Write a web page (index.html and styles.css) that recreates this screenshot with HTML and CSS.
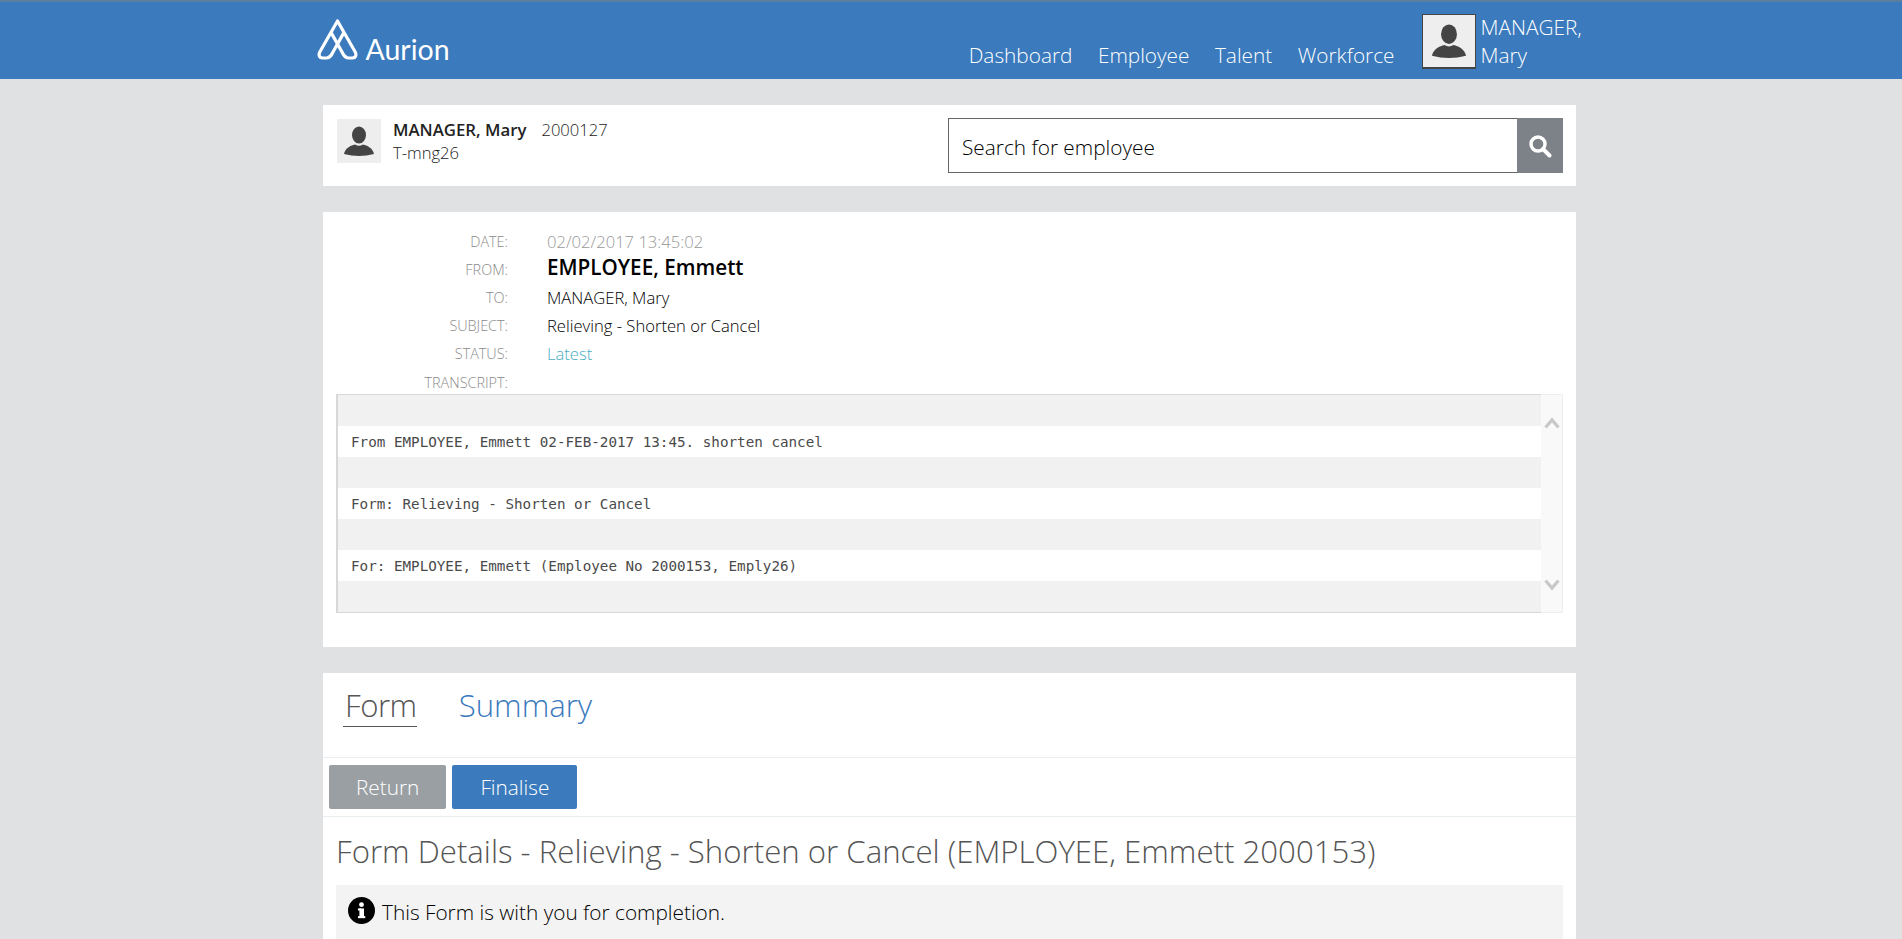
FILE: index.html
```html
<!DOCTYPE html>
<html lang="en">
<head>
	<meta charset="UTF-8">
	<title>Aurion - Form</title>
	<link rel="stylesheet" href="styles.css">
</head>
<body>
	<svg class="defs" width="0" height="0">
		<symbol id="person" viewBox="0 0 44 44">
			<ellipse cx="22" cy="16" rx="7" ry="8.6" fill="#444"/>
			<path d="M7 35C8 29 14 26.500 18 25.500Q22 28 26 25.500C30 26.500 36 29 37 35Q22 39 7 35z" fill="#444"/>
		</symbol>
	</svg>

	<header class="topbar">
		<div class="topbar-inner">
			<a class="logo" href="#">
				<svg class="logo-mark" viewBox="0 0 41 41" width="41" height="41">
					<path d="M14 13.400L25 33Q27.500 38.500 31 39L35.500 39Q40 38.500 38.500 33.500L20.500 2L2.500 33.500Q1 38.500 5.500 39L10 39Q13.500 38.500 16 33L27 13.400" fill="none" stroke="#fff" stroke-width="3.200" stroke-linejoin="round"/>
				</svg>
				<span class="logo-text">Aurion</span>
			</a>
			<nav class="nav">
				<a href="#">Dashboard</a>
				<a href="#">Employee</a>
				<a href="#">Talent</a>
				<a href="#">Workforce</a>
			</nav>
			<div class="user">
				<div class="avatar avatar-big">
					<svg viewBox="0 0 44 44" width="50" height="50"><use href="#person"/></svg>
				</div>
				<span class="user-name">MANAGER, Mary</span>
			</div>
		</div>
	</header>

	<main class="page">
		<section class="card who">
			<div class="avatar avatar-small">
				<svg viewBox="0 0 44 44" width="44" height="44"><use href="#person"/></svg>
			</div>
			<div class="who-text">
				<div><b>MANAGER, Mary</b><span class="who-no">2000127</span></div>
				<div>T-mng26</div>
			</div>
			<form class="search">
				<input class="search-box" type="text" placeholder="Search for employee">
				<button class="search-btn" type="button">
					<svg viewBox="0 0 24 24" width="24" height="24"><circle cx="10" cy="10" r="7" fill="none" stroke="#fff" stroke-width="3.400"/><path d="M15 15l6.500 6.500" stroke="#fff" stroke-width="4" stroke-linecap="round"/></svg>
				</button>
			</form>
		</section>

		<section class="card message">
			<dl class="fields">
				<dt>DATE:</dt><dd class="grey">02/02/2017 13:45:02</dd>
				<dt>FROM:</dt><dd class="from">EMPLOYEE, Emmett</dd>
				<dt>TO:</dt><dd>MANAGER, Mary</dd>
				<dt>SUBJECT:</dt><dd>Relieving - Shorten or Cancel</dd>
				<dt>STATUS:</dt><dd class="teal">Latest</dd>
				<dt>TRANSCRIPT:</dt><dd></dd>
			</dl>
			<div class="transcript">
				<div class="lines">
					<div class="line"></div>
					<div class="line">From EMPLOYEE, Emmett 02-FEB-2017 13:45. shorten cancel</div>
					<div class="line"></div>
					<div class="line">Form: Relieving - Shorten or Cancel</div>
					<div class="line"></div>
					<div class="line">For: EMPLOYEE, Emmett (Employee No 2000153, Emply26)</div>
					<div class="line"></div>
				</div>
				<div class="scroll">
					<svg viewBox="0 0 16 12" width="16" height="12"><path d="M1.500 10.500L8 3l6.500 7.500" fill="none" stroke="#c8c8c8" stroke-width="3.200"/></svg>
					<svg viewBox="0 0 16 12" width="16" height="12"><path d="M1.500 1.500L8 9l6.500-7.500" fill="none" stroke="#c8c8c8" stroke-width="3.200"/></svg>
				</div>
			</div>
		</section>

		<section class="card form-card">
			<div class="tabs">
				<a class="tab active" href="#">Form</a>
				<a class="tab" href="#">Summary</a>
			</div>
			<div class="actions">
				<button class="btn btn-grey" type="button">Return</button>
				<button class="btn btn-blue" type="button">Finalise</button>
			</div>
			<div class="details">
				<h2>Form Details - Relieving - Shorten or Cancel (EMPLOYEE, Emmett 2000153)</h2>
				<div class="notice">
					<svg viewBox="0 0 26 26" width="27" height="27"><circle cx="13" cy="13" r="13" fill="#000"/><rect x="11" y="11" width="4.400" height="9" fill="#fff"/><rect x="9.600" y="11" width="3" height="2" fill="#fff"/><rect x="9.600" y="18.400" width="7" height="2" fill="#fff"/><circle cx="13" cy="7.400" r="2.300" fill="#fff"/></svg>
					<span class="notice-text">This Form is with you for completion.</span>
				</div>
			</div>
		</section>
	</main>
</body>
</html>
```

FILE: styles.css
```css
* {
	box-sizing: border-box;
}

html, body {
	height: 939px;
	overflow: hidden;
}

body {
	margin: 0;
	font-family: "Open Sans", sans-serif;
	font-weight: 300;
	color: #000;
	background-color: #dfe1e3;
}

a {
	text-decoration: none;
	color: inherit;
}

.defs {
	position: absolute;
}

/* content centres in 1899, not 1902 */
.topbar {
	height: 79px;
	padding-right: 3px;
	background-color: #3a7abd;
	border-top: 2px solid #5a7f9f;
	color: #fff;
}

.topbar-inner {
	width: 1272px;
	margin: 0 auto;
	display: flex;
	align-items: flex-end;
	height: 100%;
}

.logo {
	display: flex;
	align-items: flex-end;
	gap: 8px;
	align-self: flex-start;
	margin: 17px 0 0 3px;
}

.logo-text {
	font-family: Lato, sans-serif;
	font-size: 28.500px;
	line-height: 22px;
	font-weight: 400;
}

.nav {
	margin-left: auto;
	display: flex;
	gap: 25.500px;
	font-size: 20.800px;
	padding-bottom: 10px;
}

.user {
	display: flex;
	align-items: center;
	margin-left: 27px;
	width: 164px;
	gap: 5px;
	font-size: 20.800px;
	line-height: 28px;
	align-self: center;
}

.avatar {
	display: flex;
	align-items: center;
	justify-content: center;
	background-color: #efeeee;
	flex: none;
}

.avatar-big {
	width: 54px;
	height: 55px;
	margin-top: 2px;
	border: 1px solid #444;
	border-bottom-width: 2px;
}

.avatar-small {
	width: 44px;
	height: 44px;
	margin-top: 1px;
}

.page {
	width: 1253px;
	margin: 26px 0 0 323px;
}

.card {
	background-color: #fff;
	margin-bottom: 26px;
}

.who {
	height: 81px;
	display: flex;
	align-items: flex-start;
	padding: 13px 13px 13px 14px;
}

.who-text {
	margin-left: 12px;
	font-size: 16.600px;
	line-height: 23px;
	color: #222;
}

.who-text b {
	font-size: 16.800px;
	font-weight: 600;
}

.who-no {
	margin-left: 15px;
}

.search {
	margin-left: auto;
	display: flex;
	width: 615px;
	height: 55px;
}

.search-box {
	flex: 1;
	border: 1px solid #666;
	border-right: none;
	padding: 2px 13px 0;
	font-family: inherit;
	font-size: 20.800px;
	font-weight: 300;
}

.search-box::placeholder {
	color: #000;
	opacity: 1;
}

.search-btn {
	width: 46px;
	border: none;
	background-color: #7c8287;
	display: flex;
	align-items: center;
	justify-content: center;
}

.message {
	height: 435px;
	padding: 15px 13px 0;
}

.fields {
	display: grid;
	grid-template-columns: 172px 1fr;
	column-gap: 39px;
	grid-auto-rows: 28.200px;
	margin: 0;
	align-items: center;
}

.fields dt {
	text-align: right;
	font-size: 14.400px;
	color: #8a8a8a;
}

.fields dd {
	margin: 0;
	font-size: 16.600px;
}

.fields .grey {
	color: #999;
}

.fields .from {
	margin-bottom: 4px;
	font-size: 20.700px;
	font-weight: 600;
}

.fields .teal {
	color: #4badc4;
}

.transcript {
	display: flex;
	height: 219px;
	margin-top: -2.200px;
}

.lines {
	flex: 1;
	border: 1px solid #d8d8d8;
	border-left-width: 2px;
	border-right: none;
	font-family: "DejaVu Sans Mono", monospace;
	font-weight: 400;
	font-size: 14.250px;
	color: #4a4a4a;
}

.line {
	height: 31px;
	line-height: 31px;
	padding: 1px 0 0 13px;
}

.line:nth-child(odd) {
	background-color: #f1f1f1;
}

.scroll {
	width: 22px;
	display: flex;
	flex-direction: column;
	justify-content: space-between;
	align-items: center;
	padding: 22px 0 21px;
	background-color: #f9f9f9;
	border: 1px solid #eee;
	border-left: none;
}

.tabs {
	height: 85px;
	display: flex;
	align-items: flex-start;
	gap: 40px;
	padding: 13px 20px 0;
	border-bottom: 1px solid #e8edf0;
	font-size: 31.200px;
	line-height: 38px;
	color: #3a7abd;
}

.tab {
	padding: 0 0 2px 2px;
}

.tab.active {
	color: #555;
	letter-spacing: -0.500px;
	border-bottom: 1px solid #555;
}

.actions {
	height: 59px;
	display: flex;
	align-items: center;
	gap: 6px;
	padding: 0 6px;
	border-bottom: 1px solid #e8edf0;
}

.btn {
	height: 44px;
	border: none;
	border-radius: 2px;
	color: #fff;
	font-family: inherit;
	font-weight: 300;
	font-size: 20.800px;
	padding: 0 27px;
}

.btn-grey {
	background-color: #9a9fa3;
}

.btn-blue {
	padding: 0 28px;
	background-color: #3a7abd;
}

.details {
	padding: 0 13px;
}

.details h2 {
	margin: 13px 0 12.500px;
	font-size: 31.200px;
	font-weight: 300;
	color: #555;
}

.notice {
	display: flex;
	align-items: flex-start;
	gap: 7px;
	height: 58px;
	padding: 12px 12px 0;
	background-color: #f3f3f3;
	font-size: 20.800px;
}

.notice-text {
	margin-top: 1px;
}
```
